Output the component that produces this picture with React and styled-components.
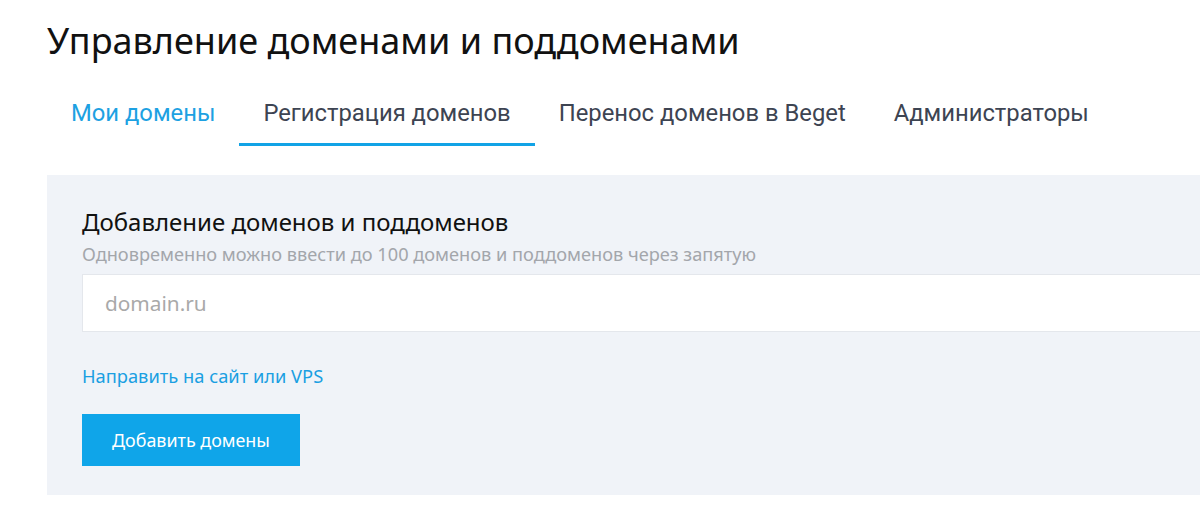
import React from "react"
import styled, { createGlobalStyle } from "styled-components"

const GlobalStyle = createGlobalStyle`
  body {
    margin: 0;
    background: #fff;
    font-family: "Noto Sans", sans-serif;
  }
`

const Page = styled.div`
  padding: 18px 0 0 47px;
  overflow: hidden;
`

const Title = styled.h1`
  margin: 0;
  font-family: "Noto Sans", sans-serif;
  font-weight: 400;
  font-size: 36px;
  line-height: 46px;
  color: #111;
`

const Tabs = styled.nav`
  display: flex;
  margin-top: 26px;
`

const Tab = styled.a`
  display: block;
  padding: 0 24px;
  height: 56px;
  line-height: 46px;
  font-family: "Roboto", sans-serif;
  font-size: 23.8px;
  color: ${(p) => (p.$link ? "#1da1e2" : "#3d4452")};
  border-bottom: 3px solid ${(p) => (p.$active ? "#12a3e6" : "transparent")};
  white-space: nowrap;
  text-decoration: none;
  box-sizing: border-box;
`

const Panel = styled.section`
  margin-top: 29px;
  background: #f0f3f8;
  padding: 31px 0 29px 35px;
`

const Heading = styled.h2`
  margin: 0;
  font-family: "Noto Sans", sans-serif;
  font-weight: 400;
  font-size: 24px;
  line-height: 32px;
  color: #111;
`

const Hint = styled.p`
  margin: 5px 0 0;
  font-family: "Noto Sans", sans-serif;
  font-size: 18.2px;
  line-height: 22px;
  color: #a3a6ab;
`

const Input = styled.input`
  display: block;
  width: 100%;
  box-sizing: border-box;
  margin-top: 9px;
  height: 58px;
  padding: 0 22px;
  border: 1px solid #e4e7ec;
  border-right: none;
  background: #fff;
  font-family: "Noto Sans", sans-serif;
  font-size: 20.8px;
  outline: none;
  &::placeholder {
    color: #a9a9a9;
  }
`

const TextLink = styled.a`
  display: block;
  width: fit-content;
  margin-top: 32px;
  font-family: "Noto Sans", sans-serif;
  font-size: 18.3px;
  line-height: 24px;
  color: #1a9fe2;
  text-decoration: none;
`

const Button = styled.button`
  display: block;
  margin-top: 26px;
  width: 218px;
  height: 52px;
  border: none;
  background: #0fa5e9;
  color: #fff;
  font-family: "Noto Sans", sans-serif;
  font-size: 17.9px;
  cursor: pointer;
`

const tabs = [
  { label: "Мои домены", link: true },
  { label: "Регистрация доменов", active: true },
  { label: "Перенос доменов в Beget" },
  { label: "Администраторы" },
]

export default function App() {
  return (
    <Page>
      <GlobalStyle />
      <Title>Управление доменами и поддоменами</Title>
      <Tabs>
        {tabs.map((t) => (
          <Tab key={t.label} $link={t.link} $active={t.active}>
            {t.label}
          </Tab>
        ))}
      </Tabs>
      <Panel>
        <Heading>Добавление доменов и поддоменов</Heading>
        <Hint>Одновременно можно ввести до 100 доменов и поддоменов через запятую</Hint>
        <Input placeholder="domain.ru" />
        <TextLink href="#">Направить на сайт или VPS</TextLink>
        <Button>Добавить домены</Button>
      </Panel>
    </Page>
  )
}
